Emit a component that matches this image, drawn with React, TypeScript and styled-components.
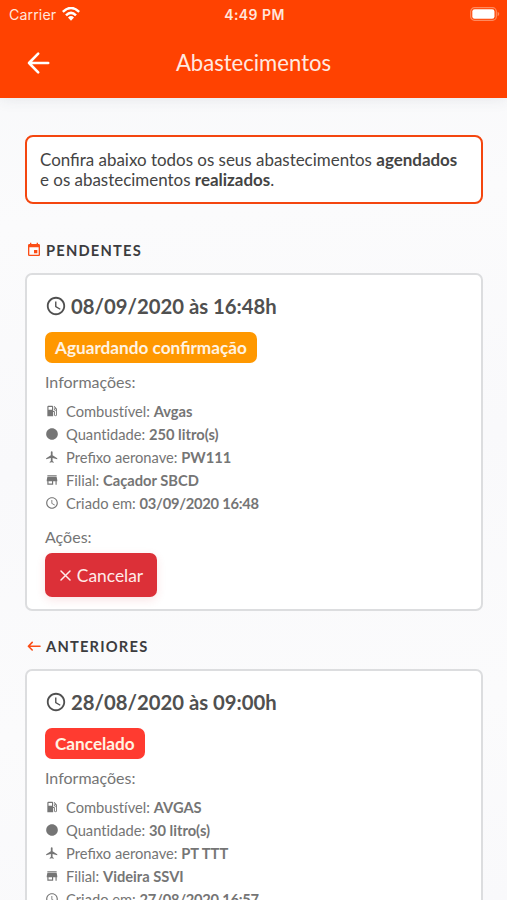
import React from 'react';
import styled, { createGlobalStyle } from 'styled-components';
import {
  MdAccessTime,
  MdEvent,
  MdFlight,
  MdLens,
  MdLocalGasStation,
  MdStore,
} from 'react-icons/md';

const GlobalStyle = createGlobalStyle`
  * { box-sizing: border-box; }
  html, body { margin: 0; padding: 0; overflow: hidden; }
  body { font-family: Lato, "Open Sans", sans-serif; -webkit-font-smoothing: antialiased; }
`;

const Screen = styled.div`
  height: 900px;
  overflow: hidden;
  display: flex;
  flex-direction: column;
  background: linear-gradient(175deg, #f7f8fa 0%, #fbfbfc 24%, #f9f9fb 50%, #fbfbfc 78%, #f9f9fb 100%);
`;

const Header = styled.header`
  flex: none;
  height: 98px;
  background: #ff4201;
  color: #fff;
  box-shadow: 0 1px 14px rgba(60, 70, 90, 0.1);
`;

const StatusBar = styled.div`
  height: 28px;
  padding: 0 7px 0 9px;
  display: grid;
  grid-template-columns: 1fr auto 1fr;
  align-items: center;
  font-family: Inter, "Liberation Sans", sans-serif;
  font-size: 14.2px;
  color: #ffe6dc;
`;

const Carrier = styled.div`
  display: flex;
  align-items: center;
  gap: 6px;
  letter-spacing: 0.1px;
`;

const Clock = styled.div`
  font-weight: 600;
  font-size: 14px;
  letter-spacing: 0.45px;
`;

const BatterySlot = styled.div`
  display: flex;
  justify-content: flex-end;
`;

const NavBar = styled.div`
  height: 69px;
  padding: 0 24px;
  display: grid;
  grid-template-columns: 28px 1fr 28px;
  align-items: center;
`;

const BackButton = styled.button`
  width: 28px;
  height: 28px;
  padding: 0;
  border: 0;
  background: none;
  color: #fff;
  display: flex;
`;

const Title = styled.h1`
  margin: 0;
  font-weight: 400;
  font-size: 22.1px;
  line-height: 28px;
  text-align: center;
  color: #ffe9e0;
`;

const Content = styled.main`
  padding: 37px 24px 0 25px;
`;

const Notice = styled.p`
  margin: 0 0 37px;
  height: 69px;
  padding: 13px 0 0 13px;
  border: 2.5px solid #f4460f;
  border-radius: 8px;
  background: #fff;
  color: #444;
  font-size: 16.95px;
  line-height: 20px;
  white-space: nowrap;
`;

const SectionTitle = styled.h2`
  margin: 0;
  height: 18px;
  display: flex;
  align-items: center;
  gap: 4px;
  padding-left: 1px;
  color: #3c3c3e;
  font-size: 14.7px;
  font-weight: 700;
  letter-spacing: 1.2px;
  svg { color: #fb4d16; flex: none; }
`;

const Card = styled.article`
  margin: 14px 0 26px;
  height: 338px;
  padding: 16px 0 0 18px;
  border: 2px solid #dcdddf;
  border-radius: 7px;
  background: #fff;
  color: #757575;
`;

const DateLine = styled.h3`
  margin: 0;
  height: 29px;
  display: flex;
  align-items: center;
  gap: 4px;
  color: #505050;
  font-size: 20.3px;
  font-weight: 700;
  svg { flex: none; }
`;

const Badge = styled.span<{ $color: string }>`
  margin-top: 12px;
  height: 31px;
  width: fit-content;
  padding: 0 10px;
  display: flex;
  align-items: center;
  border-radius: 7px;
  background: ${(p) => p.$color};
  color: #fff3e2;
  font-size: 17.2px;
  font-weight: 700;
`;

const Label = styled.div<{ $top: number }>`
  margin-top: ${(p) => p.$top}px;
  height: 20px;
  font-size: 16px;
  line-height: 20px;
`;

const Details = styled.ul`
  margin: 7px 0 0;
  padding: 0;
  list-style: none;
`;

const Detail = styled.li<{ $plain?: boolean; $tight?: boolean }>`
  height: 23.2px;
  display: flex;
  align-items: center;
  gap: 7px;
  font-size: 14.7px;
  font-variant-ligatures: ${(p) => (p.$plain ? 'none' : 'normal')};
  white-space: pre;
  svg { flex: none; }
  strong { letter-spacing: ${(p) => (p.$tight ? '-0.25px' : 'normal')}; }
`;

const CancelButton = styled.button`
  margin-top: 6px;
  height: 44px;
  width: 112px;
  padding: 1px 0 0 1px;
  border: 0;
  border-radius: 7px;
  display: flex;
  align-items: center;
  justify-content: center;
  gap: 6px;
  background: #dc3038;
  box-shadow: 0 3px 10px rgba(220, 48, 56, 0.13);
  color: #ffebea;
  font: 400 17.4px Lato, sans-serif;
`;

const WifiIcon = () => (
  <svg width="18" height="15" viewBox="0 0 18 15" fill="none" stroke="#fff" strokeWidth="2.5">
    <path d="M0.8 4.9Q9-2.9 17.2 4.9" />
    <path d="M4 8.3Q9 3.3 14 8.3" />
    <path d="M6 10.5Q9 7.7 12 10.5L9 13.7Z" fill="#fff" stroke="none" />
  </svg>
);

const BatteryIcon = () => (
  <svg width="30" height="14" viewBox="0 0 30 14" fill="none">
    <rect x="0.7" y="0.7" width="25.6" height="12.6" rx="3.8" stroke="#ff8a5e" strokeWidth="1.2" />
    <rect x="2.3" y="2.3" width="22.2" height="9.4" rx="2.3" fill="#fff" />
    <path d="M27.6 4.8v4.4c2.2-.8 2.2-3.6 0-4.4Z" fill="#ff8a5e" />
  </svg>
);

const SmallArrow = () => (
  <svg width="16" height="16" viewBox="0 0 16 16" fill="none" stroke="currentColor" strokeWidth="1.6" strokeLinecap="round" strokeLinejoin="round">
    <path d="M14 8.2H2.6M6.2 4.4L2.4 8.2L6.2 12" />
  </svg>
);

const CrossIcon = () => (
  <svg width="11" height="11" viewBox="0 0 11 11" stroke="currentColor" strokeWidth="1.5" strokeLinecap="round">
    <path d="M1 1l9 9M10 1L1 10" />
  </svg>
);

type Refuel = {
  date: string;
  status: string;
  color: string;
  fuel: string;
  amount: string;
  prefix: string;
  branch: string;
  created: string;
  cancellable?: boolean;
};

const pending: Refuel = {
  date: '08/09/2020 às 16:48h',
  status: 'Aguardando confirmação',
  color: '#ff9800',
  fuel: 'Avgas',
  amount: '250 litro(s)',
  prefix: 'PW111',
  branch: 'Caçador SBCD',
  created: '03/09/2020 16:48',
  cancellable: true,
};

const previous: Refuel = {
  date: '28/08/2020 às 09:00h',
  status: 'Cancelado',
  color: '#ff3b30',
  fuel: 'AVGAS',
  amount: '30 litro(s)',
  prefix: 'PT TTT',
  branch: 'Videira SSVI',
  created: '27/08/2020 16:57',
};

const RefuelCard = ({ item }: { item: Refuel }) => {
  const rows = [
    { Icon: MdLocalGasStation, label: 'Combustível', value: item.fuel, plain: true },
    { Icon: MdLens, label: 'Quantidade', value: item.amount, plain: true },
    { Icon: MdFlight, label: 'Prefixo aeronave', value: item.prefix },
    { Icon: MdStore, label: 'Filial', value: item.branch },
    { Icon: MdAccessTime, label: 'Criado em', value: item.created, tight: true },
  ];
  return (
    <Card>
      <DateLine>
        <MdAccessTime size={22} />
        {item.date}
      </DateLine>
      <Badge $color={item.color}>{item.status}</Badge>
      <Label $top={9}>Informações:</Label>
      <Details>
        {rows.map(({ Icon, label, value, plain, tight }) => (
          <Detail key={label} $plain={plain} $tight={tight}>
            <Icon size={14} />
            <span>
              {label}: <strong>{value}</strong>
            </span>
          </Detail>
        ))}
      </Details>
      {item.cancellable && (
        <>
          <Label $top={12}>Ações:</Label>
          <CancelButton>
            <CrossIcon />
            Cancelar
          </CancelButton>
        </>
      )}
    </Card>
  );
};

export default function App() {
  return (
    <Screen>
      <GlobalStyle />
      <Header>
        <StatusBar>
          <Carrier>
            Carrier
            <WifiIcon />
          </Carrier>
          <Clock>4:49 PM</Clock>
          <BatterySlot>
            <BatteryIcon />
          </BatterySlot>
        </StatusBar>
        <NavBar>
          <BackButton aria-label="Voltar">
            <svg width="28" height="28" viewBox="0 0 28 28" fill="none" stroke="currentColor" strokeWidth="2.6" strokeLinecap="round" strokeLinejoin="round">
              <path d="M24.2 14H5M14.2 4.6L5 14l9.2 9.4" />
            </svg>
          </BackButton>
          <Title>Abastecimentos</Title>
        </NavBar>
      </Header>
      <Content>
        <Notice>
          Confira abaixo todos os seus abastecimentos <strong>agendados</strong>
          <br />e os abastecimentos <strong>realizados</strong>.
        </Notice>
        <SectionTitle>
          <MdEvent size={16} />
          PENDENTES
        </SectionTitle>
        <RefuelCard item={pending} />
        <SectionTitle>
          <SmallArrow />
          ANTERIORES
        </SectionTitle>
        <RefuelCard item={previous} />
      </Content>
    </Screen>
  );
}
